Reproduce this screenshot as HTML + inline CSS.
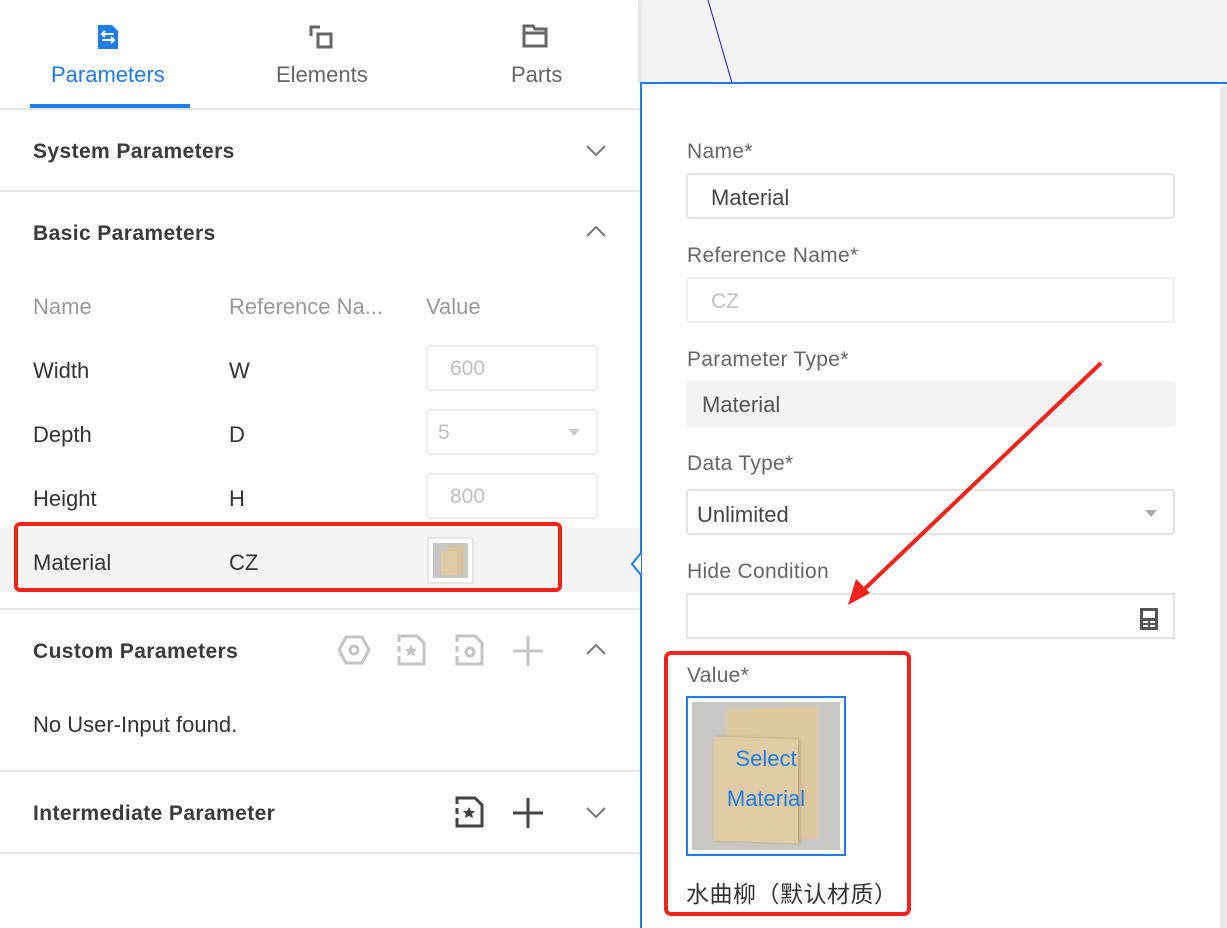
<!DOCTYPE html>
<html><head><meta charset="utf-8"><style>
*{box-sizing:border-box;margin:0;padding:0}
body{width:1227px;height:928px;position:relative;overflow:hidden;background:#fff;font-family:"Liberation Sans","Noto Sans CJK SC",sans-serif;color:#333}
.a{position:absolute;white-space:nowrap}
.t{font-size:22px;line-height:26px}
.line{position:absolute;left:0;width:640px;height:2px;background:#e6e6e6}
.hdr{font-size:21px;color:#3a3a3a;font-weight:bold;letter-spacing:.4px}
.inp{position:absolute;left:686px;width:489px;height:46px;border:2px solid #e3e3e3;border-radius:4px;background:#fff}
.lbl{position:absolute;left:687px;font-size:21px;color:#666;letter-spacing:.3px}
.gi{color:#555}
.sm{position:absolute;left:426px;width:172px;height:46px;border:2px solid #eee;border-radius:3px;color:#c0c0c0;font-size:21px;padding:10px 0 0 22px}
</style></head><body>
<svg class="a" style="left:96px;top:24px" width="24" height="26" viewBox="0 0 24 26"><path d="M2 1h14l6 6v18H2z" fill="#1f7cf0"/><path d="M6 10h12M6 16h12M9 7l-3 3 3 3M15 13l3 3-3 3" stroke="#fff" stroke-width="2" fill="none"/></svg>
<svg class="a" style="left:309px;top:25px" width="24" height="24" viewBox="0 0 24 24"><path d="M2 11V2h9" stroke="#666" stroke-width="3" fill="none"/><rect x="9" y="9" width="13" height="13" stroke="#666" stroke-width="3" fill="none"/></svg>
<svg class="a" style="left:522px;top:24px" width="26" height="24" viewBox="0 0 26 24"><path d="M2 2h9l2 3h11v17H2z" stroke="#666" stroke-width="3" fill="none"/><path d="M2 9h22" stroke="#666" stroke-width="3"/></svg>
<div class="a t" style="left:51px;top:62px;color:#1f7cf0">Parameters</div>
<div class="a t" style="left:276px;top:62px;color:#666">Elements</div>
<div class="a t" style="left:511px;top:62px;color:#666">Parts</div>
<div class="a" style="left:30px;top:104px;width:160px;height:4px;background:#1f7cf0"></div>
<div class="line" style="top:108px"></div>
<div class="a hdr" style="left:33px;top:140px">System Parameters</div>
<svg class="a" style="left:585px;top:144px" width="22" height="14"><path d="M2 2l9 9 9-9" stroke="#777" stroke-width="2" fill="none"/></svg>
<div class="line" style="top:190px"></div>
<div class="a hdr" style="left:33px;top:222px">Basic Parameters</div>
<svg class="a" style="left:585px;top:224px" width="22" height="14"><path d="M2 12l9-9 9 9" stroke="#777" stroke-width="2" fill="none"/></svg>
<div class="a t" style="left:33px;top:294px;color:#999">Name</div>
<div class="a t" style="left:229px;top:294px;color:#999">Reference Na...</div>
<div class="a t" style="left:426px;top:294px;color:#999">Value</div>
<div class="a t" style="left:33px;top:358px">Width</div><div class="a t" style="left:229px;top:358px">W</div>
<div class="sm" style="top:345px">600</div>
<div class="a t" style="left:33px;top:422px">Depth</div><div class="a t" style="left:229px;top:422px">D</div>
<div class="sm" style="top:409px;padding-left:10px">5<span style="position:absolute;right:16px;top:18px;border:6px solid transparent;border-top:7px solid #ccc"></span></div>
<div class="a t" style="left:33px;top:486px">Height</div><div class="a t" style="left:229px;top:486px">H</div>
<div class="sm" style="top:473px">800</div>
<div class="a" style="left:0;top:528px;width:640px;height:64px;background:#f4f4f4"></div>
<div class="a t" style="left:33px;top:550px">Material</div><div class="a t" style="left:229px;top:550px">CZ</div>
<div class="a" style="left:427px;top:537px;width:47px;height:47px;border:2px solid #e6e6e6;background:#fff;padding:4px"><div style="width:35px;height:35px;background:#c8c6c2;position:relative"><div style="position:absolute;left:14px;top:3px;width:17px;height:28px;background:#d8c49c"></div><div style="position:absolute;left:8px;top:8px;width:16px;height:24px;background:#e0cca4"></div></div></div>
<div class="a" style="left:14px;top:522px;width:548px;height:70px;border:4px solid #f2231a;border-radius:6px"></div>
<div class="line" style="top:608px"></div>
<div class="a hdr" style="left:33px;top:640px">Custom Parameters</div>
<svg class="a" style="left:337px;top:634px" width="34" height="32"><path d="M9 3h16l7 13-7 13H9L2 16z" stroke="#c4c4c4" stroke-width="3" fill="none"/><circle cx="17" cy="16" r="4" stroke="#c4c4c4" stroke-width="3" fill="none"/></svg>
<svg class="a" style="left:397px;top:634px" width="30" height="32"><path d="M2 8V2h18l7 7v21H2v-8M2 12v6" stroke="#c4c4c4" stroke-width="3" fill="none"/><path d="M14 11l2 4h4l-3 3 1 4-4-2-4 2 1-4-3-3h4z" fill="#c4c4c4"/></svg>
<svg class="a" style="left:455px;top:634px" width="30" height="32"><path d="M2 8V2h18l7 7v21H2v-8M2 12v6" stroke="#c4c4c4" stroke-width="3" fill="none"/><circle cx="15" cy="18" r="4" stroke="#c4c4c4" stroke-width="3" fill="none"/></svg>
<svg class="a" style="left:512px;top:635px" width="32" height="32"><path d="M16 1v30M1 16h30" stroke="#c4c4c4" stroke-width="3"/></svg>
<svg class="a" style="left:585px;top:642px" width="22" height="14"><path d="M2 12l9-9 9 9" stroke="#777" stroke-width="2" fill="none"/></svg>
<div class="a t" style="left:33px;top:712px">No User-Input found.</div>
<div class="line" style="top:770px"></div>
<div class="a hdr" style="left:33px;top:802px">Intermediate Parameter</div>
<svg class="a" style="left:455px;top:796px" width="30" height="32"><path d="M2 8V2h18l7 7v21H2v-8M2 12v6" stroke="#444" stroke-width="3" fill="none"/><path d="M14 11l2 4h4l-3 3 1 4-4-2-4 2 1-4-3-3h4z" fill="#444"/></svg>
<svg class="a" style="left:512px;top:797px" width="32" height="32"><path d="M16 1v30M1 16h30" stroke="#444" stroke-width="3"/></svg>
<svg class="a" style="left:585px;top:806px" width="22" height="14"><path d="M2 2l9 9 9-9" stroke="#777" stroke-width="2" fill="none"/></svg>
<div class="line" style="top:852px"></div>
<div class="a" style="left:638px;top:0;width:589px;height:83px;background:#f4f4f4;box-shadow:inset 6px 0 6px -4px #ddd"></div>
<svg class="a" style="left:700px;top:0" width="40" height="84"><path d="M8 0L32 83" stroke="#1010ff" stroke-width="1"/></svg>
<div class="a" style="left:640px;top:82px;width:587px;height:846px;border-left:2px solid #1f7cf0;border-top:2px solid #1f7cf0;background:#fff"></div>
<div class="a" style="left:1220px;top:86px;width:7px;height:842px;background:#e8e8e8;border-radius:3px 0 0 0"></div>
<svg class="a" style="left:630px;top:552px" width="12" height="24"><path d="M11 1L2 12l9 11" stroke="#1f7cf0" stroke-width="2" fill="#fff"/></svg>
<div class="lbl" style="top:140px">Name*</div>
<div class="inp" style="top:173px"><span class="a t gi" style="left:23px;top:10px;color:#444">Material</span></div>
<div class="lbl" style="top:244px">Reference Name*</div>
<div class="inp" style="top:277px;border-color:#eee"><span class="a t" style="left:23px;top:10px;color:#c0c0c0;font-size:21px">CZ</span></div>
<div class="lbl" style="top:348px">Parameter Type*</div>
<div class="inp" style="top:381px;background:#f3f3f3;border:none;width:490px"><span class="a t" style="left:16px;top:11px;color:#555">Material</span></div>
<div class="lbl" style="top:452px">Data Type*</div>
<div class="inp" style="top:489px"><span class="a t" style="left:9px;top:11px;color:#444">Unlimited</span><span style="position:absolute;right:16px;top:19px;border:6px solid transparent;border-top:7px solid #aaa"></span></div>
<div class="lbl" style="top:560px">Hide Condition</div>
<div class="inp" style="top:593px;border-radius:0"><svg style="position:absolute;right:14px;top:12px" width="20" height="24"><rect x="1" y="1" width="18" height="22" fill="#555"/><rect x="4" y="4" width="12" height="7" fill="#fff"/><rect x="4" y="14" width="5" height="2" fill="#fff"/><rect x="11" y="14" width="5" height="2" fill="#fff"/><rect x="4" y="18" width="5" height="2" fill="#fff"/><rect x="11" y="18" width="5" height="2" fill="#fff"/></svg></div>
<div class="lbl" style="top:664px">Value*</div>
<div class="a" style="left:686px;top:696px;width:160px;height:160px;border:2px solid #1f7cf0;padding:4px;background:#fff">
<div style="width:148px;height:148px;background:#c8c7c4;position:relative">
<div style="position:absolute;left:34px;top:6px;width:92px;height:132px;background:#dcc79f;transform:skewY(-2deg)"></div>
<div style="position:absolute;left:22px;top:36px;width:84px;height:104px;background:#e0cca4;transform:skewY(2deg);box-shadow:2px 0 3px #b8a47c"></div>
<div style="position:absolute;left:0;width:148px;top:37px;text-align:center;color:#1f7cf0;font-size:22px;line-height:40px">Select<br>Material</div>
</div></div>
<div class="a" style="left:686px;top:875px;font-size:23px;color:#333;letter-spacing:.5px">水曲柳（默认材质）</div>
<div class="a" style="left:664px;top:651px;width:247px;height:265px;border:4px solid #f2231a;border-radius:7px"></div>
<svg class="a" style="left:830px;top:355px" width="280" height="260"><path d="M271 8L24 244" stroke="#f2231a" stroke-width="4"/><path d="M18 250l8-26 14 14z" fill="#f2231a"/></svg>
</body></html>
